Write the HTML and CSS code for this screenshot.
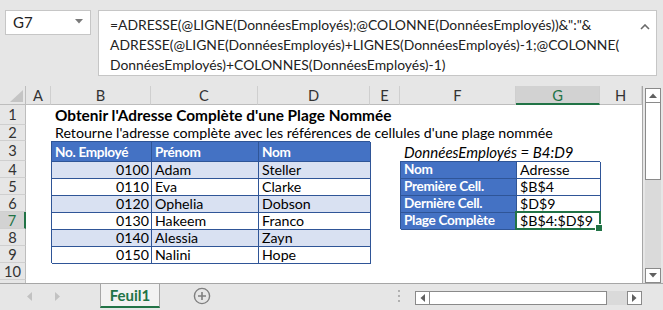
FILE: index.html
```html
<!DOCTYPE html>
<html lang="fr">
<head>
<meta charset="utf-8">
<title>Adresse Plage Nommée</title>
<link rel="stylesheet" href="styles.css">
</head>
<body>
<div class="fbar">
  <div class="namebox"><span>G7</span><svg class="dd" width="8" height="5" viewBox="0 0 8 5"><polygon points="0,0 8,0 4,4.5" fill="#7a7a7a"/></svg></div>
  <div class="formula">
    <div class="ftext">=ADRESSE(@LIGNE(DonnéesEmployés);@COLONNE(DonnéesEmployés))&amp;":"&amp;
ADRESSE(@LIGNE(DonnéesEmployés)+LIGNES(DonnéesEmployés)-1;@COLONNE(
DonnéesEmployés)+COLONNES(DonnéesEmployés)-1)</div>
    <svg class="collapse" width="10" height="6" viewBox="0 0 10 6"><polyline points="1,5 5,1 9,5" fill="none" stroke="#6a6a6a" stroke-width="1.6"/></svg>
  </div>
</div>

<div class="main">
  <div class="grid">
    <div class="corner"><svg width="13" height="12" viewBox="0 0 13 12"><polygon points="13,0 13,12 0,12" fill="#c4c4c4"/></svg></div>
    <div class="ch">A</div>
    <div class="ch">B</div>
    <div class="ch">C</div>
    <div class="ch">D</div>
    <div class="ch">E</div>
    <div class="ch">F</div>
    <div class="ch ch-sel">G</div>
    <div class="ch">H</div>

    <div class="rh r1">1</div>
    <div class="rh r2">2</div>
    <div class="rh r3">3</div>
    <div class="rh r4">4</div>
    <div class="rh r5">5</div>
    <div class="rh r6">6</div>
    <div class="rh r7 rh-sel">7</div>
    <div class="rh r8">8</div>
    <div class="rh r9">9</div>
    <div class="rh r10">10</div>
    <div class="rh r11"></div>

    <div class="sheet"></div>

    <div class="cell title">Obtenir l'Adresse Complète d'une Plage Nommée</div>
    <div class="cell subtitle">Retourne l'adresse complète avec les références de cellules d'une plage nommée</div>
    <div class="cell named">DonnéesEmployés = B4:D9</div>

    <div class="tbl1">
      <div class="tc th">No. Employé</div><div class="tc th">Prénom</div><div class="tc th">Nom</div>
      <div class="tc band num">0100</div><div class="tc band">Adam</div><div class="tc band">Steller</div>
      <div class="tc num">0110</div><div class="tc">Eva</div><div class="tc">Clarke</div>
      <div class="tc band num">0120</div><div class="tc band">Ophelia</div><div class="tc band">Dobson</div>
      <div class="tc num">0130</div><div class="tc">Hakeem</div><div class="tc">Franco</div>
      <div class="tc band num">0140</div><div class="tc band">Alessia</div><div class="tc band">Zayn</div>
      <div class="tc num">0150</div><div class="tc">Nalini</div><div class="tc">Hope</div>
    </div>

    <div class="tbl2">
      <div class="tc th">Nom</div><div class="tc">Adresse</div>
      <div class="tc th">Première Cell.</div><div class="tc">$B$4</div>
      <div class="tc th">Dernière Cell.</div><div class="tc">$D$9</div>
      <div class="tc th">Plage Complète</div><div class="tc">$B$4:$D$9</div>
    </div>

    <div class="sel"></div>
  </div>

  <div class="vscroll">
    <div class="sbtn"><svg width="8" height="5" viewBox="0 0 8 5"><polygon points="0,5 8,5 4,0.5" fill="#606060"/></svg></div>
    <div class="vthumb"></div>
    <div class="vtrack"></div>
    <div class="sbtn"><svg width="8" height="5" viewBox="0 0 8 5"><polygon points="0,0 8,0 4,4.5" fill="#606060"/></svg></div>
  </div>
</div>

<div class="tabbar">
  <div class="nav">
    <svg width="5" height="9" viewBox="0 0 5 9"><polygon points="5,0 5,9 0,4.5" fill="#c2c2c2"/></svg>
    <svg width="5" height="9" viewBox="0 0 5 9"><polygon points="0,0 0,9 5,4.5" fill="#c2c2c2"/></svg>
  </div>
  <div class="tab">Feuil1</div>
  <div class="add"><svg width="18" height="18" viewBox="0 0 18 18"><circle cx="9" cy="9" r="7.6" fill="none" stroke="#7f7f7f" stroke-width="1.4"/><path d="M9 5v8M5 9h8" stroke="#7f7f7f" stroke-width="1.6"/></svg></div>
  <div class="split"><span></span><span></span><span></span></div>
  <div class="hscroll">
    <div class="hbtn"><svg width="5" height="8" viewBox="0 0 5 8"><polygon points="5,0 5,8 0.5,4" fill="#606060"/></svg></div>
    <div class="hthumb"></div>
    <div class="htrack"></div>
    <div class="hbtn"><svg width="5" height="8" viewBox="0 0 5 8"><polygon points="0,0 0,8 4.5,4" fill="#606060"/></svg></div>
  </div>
</div>
</body>
</html>
```

FILE: styles.css
```css
* { box-sizing: border-box; }

body {
  margin: 0;
  width: 663px;
  height: 310px;
  overflow: hidden;
  background: #e6e6e6;
  font-family: Lato, "Liberation Sans", sans-serif;
  color: #000;
}

/* formula bar */
.fbar {
  height: 86px;
  display: flex;
  align-items: flex-start;
  gap: 7px;
  padding: 10px 0 0 5px;
}
.namebox {
  width: 86px;
  height: 25px;
  background: #fff;
  border: 1px solid #c6c6c6;
  display: flex;
  align-items: center;
  justify-content: space-between;
  padding: 0 7px 2px 7px;
  font-size: 15px;
  color: #222;
}
.formula {
  width: 559px;
  height: 66px;
  background: #fff;
  border: 1px solid #c6c6c6;
  display: flex;
  justify-content: space-between;
  align-items: flex-start;
  padding: 4px 6px 0 11px;
}
.ftext {
  white-space: pre;
  font-size: 13.9px;
  line-height: 20px;
  color: #222;
}
.collapse { margin-top: 9px; }

/* main area */
.main {
  display: flex;
  height: 197px;
}
.grid {
  width: 643px;
  display: grid;
  grid-template-columns: 26px 25px 100px 107px 112px 30px 116px 84px 42px;
  grid-template-rows: 19px 20px 16px 20px repeat(7, 17px) 3px;
  border-right: 1px solid #a6a6a6;
  font-size: 14.2px;
}
.corner {
  grid-column: 1;
  grid-row: 1;
  display: flex;
  align-items: flex-end;
  justify-content: flex-end;
  padding: 0 2px 2px 0;
  border-right: 1px solid #bdbdbd;
  border-bottom: 1px solid #bdbdbd;
}
.ch {
  grid-row: 1;
  display: flex;
  align-items: center;
  justify-content: center;
  color: #333;
  font-size: 14.67px;
  border-right: 1px solid #cfcfcf;
  border-bottom: 1px solid #bdbdbd;
  padding-top: 1px;
}
.ch-sel {
  background: #d2d2d2;
  color: #217346;
  border-bottom: 2px solid #217346;
}
.rh {
  grid-column: 1;
  display: flex;
  align-items: center;
  justify-content: center;
  color: #333;
  font-size: 14.67px;
  border-right: 1px solid #bdbdbd;
  border-bottom: 1px solid #cfcfcf;
}
.rh-sel {
  background: #d2d2d2;
  color: #217346;
  border-right: 2px solid #217346;
}
.r1 { grid-row: 2; }
.r2 { grid-row: 3; }
.r3 { grid-row: 4; }
.r4 { grid-row: 5; }
.r5 { grid-row: 6; }
.r6 { grid-row: 7; }
.r7 { grid-row: 8; }
.r8 { grid-row: 9; }
.r9 { grid-row: 10; }
.r10 { grid-row: 11; }
.r11 { grid-row: 12; border-bottom: none; }

.sheet {
  grid-column: 2 / 10;
  grid-row: 2 / 13;
  background: #fff;
}

.cell {
  display: flex;
  align-items: flex-end;
  line-height: 17px;
  white-space: nowrap;
  padding-left: 4px;
}
.title {
  grid-column: 3 / 10;
  grid-row: 2;
  font-weight: 700;
  font-size: 15.4px;
  line-height: 18px;
  padding-bottom: 1px;
}
.subtitle {
  grid-column: 3 / 10;
  grid-row: 3;
}
.named {
  grid-column: 7 / 10;
  grid-row: 4;
  font-style: italic;
  font-size: 15px;
}

/* tables */
.tbl1, .tbl2 {
  display: grid;
  box-shadow: 1px 1px 0 #2f5597;
}
.tbl1 {
  grid-column: 3 / 6;
  grid-row: 4 / 11;
  grid-template-columns: 100px 107px 112px;
  grid-template-rows: 20px repeat(6, 17px);
}
.tbl2 {
  grid-column: 7 / 9;
  grid-row: 5 / 9;
  grid-template-columns: 116px 84px;
  grid-template-rows: repeat(4, 17px);
}
.tc {
  border-left: 1px solid #2f5597;
  border-top: 1px solid #2f5597;
  display: flex;
  align-items: flex-end;
  line-height: 17px;
  padding-left: 3px;
  white-space: nowrap;
  background: #fff;
}
.th {
  background: #4472c4;
  color: #fff;
  font-weight: 700;
  font-size: 13.6px;
  letter-spacing: -0.3px;
}
.band { background: #d9e1f2; }
.num {
  justify-content: flex-end;
  padding-right: 2px;
}

.sel {
  grid-column: 8;
  grid-row: 8;
  margin: -1px -1px -1px -1px;
  border: 2px solid #217346;
  position: relative;
}
.sel::after {
  content: "";
  position: absolute;
  right: -4px;
  bottom: -4px;
  width: 6px;
  height: 6px;
  background: #217346;
  border: 1px solid #fff;
}

/* vertical scrollbar */
.vscroll {
  width: 20px;
  display: flex;
  flex-direction: column;
  padding: 2px 2px 0 2px;
}
.sbtn {
  height: 15px;
  background: #fff;
  border: 1px solid #8a8a8a;
  display: flex;
  align-items: center;
  justify-content: center;
  flex: none;
}
.vthumb {
  height: 77px;
  background: #fff;
  border: 1px solid #8a8a8a;
  border-top: none;
  flex: none;
}
.vtrack {
  flex: 1;
  background: #dadada;
}

/* sheet tabs */
.tabbar {
  height: 27px;
  border-top: 1px solid #a6a6a6;
  display: flex;
  align-items: flex-start;
}
.nav {
  width: 100px;
  height: 24px;
  display: flex;
  align-items: center;
  gap: 23px;
  padding-left: 27px;
}
.tab {
  width: 60px;
  height: 24px;
  background: #f2f2f2;
  border-left: 1px solid #a6a6a6;
  border-right: 1px solid #a6a6a6;
  border-bottom: 2px solid #217346;
  color: #217346;
  font-weight: 700;
  font-size: 15px;
  display: flex;
  align-items: center;
  justify-content: center;
}
.add {
  width: 84px;
  height: 24px;
  display: flex;
  align-items: center;
  justify-content: center;
}
.split {
  margin-left: 152px;
  width: 6px;
  height: 24px;
  display: flex;
  flex-direction: column;
  align-items: center;
  justify-content: center;
  gap: 3px;
}
.split span {
  width: 2px;
  height: 2px;
  background: #b0b0b0;
}
.hscroll {
  margin-left: 13px;
  margin-top: 7px;
  width: 227px;
  height: 14px;
  display: flex;
}
.hbtn {
  width: 15px;
  background: #fff;
  border: 1px solid #8a8a8a;
  display: flex;
  align-items: center;
  justify-content: center;
}
.hthumb {
  width: 177px;
  background: #fff;
  border: 1px solid #8a8a8a;
  border-left: none;
}
.htrack {
  flex: 1;
  background: #dadada;
}
```
